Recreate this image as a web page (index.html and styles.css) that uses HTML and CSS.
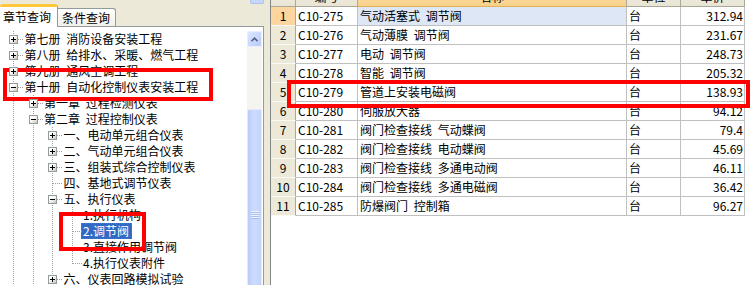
FILE: index.html
```html
<!DOCTYPE html>
<html lang="zh">
<head>
    <meta charset="UTF-8">
    <title>章节查询</title>
    <link rel="stylesheet" href="styles.css">
</head>
<body>

    <div class="side">
        <div class="strip"><span class="stripBtn"></span></div>
        <div class="tabs">
            <div class="tab tabOn">章节查询</div>
            <div class="tab">条件查询</div>
        </div>
        <div class="panel">
            <div class="tree">
                <div class="row"><i class="node"><span class="box"><svg viewBox="0 0 7 7"><path d="M1 3.5h5M3.5 1v5"/></svg></span></i><span class="label">第七册 消防设备安装工程</span></div>
                <div class="row"><i class="node"><span class="box"><svg viewBox="0 0 7 7"><path d="M1 3.5h5M3.5 1v5"/></svg></span></i><span class="label">第八册 给排水、采暖、燃气工程</span></div>
                <div class="row"><i class="node"><span class="box"><svg viewBox="0 0 7 7"><path d="M1 3.5h5M3.5 1v5"/></svg></span></i><span class="label">第九册 通风空调工程</span></div>
                <div class="row"><i class="node"><span class="box"><svg viewBox="0 0 7 7"><path d="M1 3.5h5"/></svg></span></i><span class="label">第十册 自动化控制仪表安装工程</span></div>

                <div class="row"><i class="guide"></i><i class="node"><span class="box"><svg viewBox="0 0 7 7"><path d="M1 3.5h5M3.5 1v5"/></svg></span></i><span class="label">第一章 过程检测仪表</span></div>
                <div class="row"><i class="guide"></i><i class="node"><span class="box"><svg viewBox="0 0 7 7"><path d="M1 3.5h5"/></svg></span></i><span class="label">第二章 过程控制仪表</span></div>

                <div class="row"><i class="guide"></i><i class="guide"></i><i class="node"><span class="box"><svg viewBox="0 0 7 7"><path d="M1 3.5h5M3.5 1v5"/></svg></span></i><span class="label">一、电动单元组合仪表</span></div>
                <div class="row"><i class="guide"></i><i class="guide"></i><i class="node"><span class="box"><svg viewBox="0 0 7 7"><path d="M1 3.5h5M3.5 1v5"/></svg></span></i><span class="label">二、气动单元组合仪表</span></div>
                <div class="row"><i class="guide"></i><i class="guide"></i><i class="node"><span class="box"><svg viewBox="0 0 7 7"><path d="M1 3.5h5M3.5 1v5"/></svg></span></i><span class="label">三、组装式综合控制仪表</span></div>
                <div class="row"><i class="guide"></i><i class="guide"></i><i class="node"></i><span class="label">四、基地式调节仪表</span></div>
                <div class="row"><i class="guide"></i><i class="guide"></i><i class="node"><span class="box"><svg viewBox="0 0 7 7"><path d="M1 3.5h5"/></svg></span></i><span class="label">五、执行仪表</span></div>

                <div class="row"><i class="guide"></i><i class="guide"></i><i class="guide"></i><i class="node"></i><span class="label">1.执行机构</span></div>
                <div class="row"><i class="guide"></i><i class="guide"></i><i class="guide"></i><i class="node"></i><span class="label sel">2.调节阀</span></div>
                <div class="row"><i class="guide"></i><i class="guide"></i><i class="guide"></i><i class="node"></i><span class="label">3.直接作用调节阀</span></div>
                <div class="row"><i class="guide"></i><i class="guide"></i><i class="guide"></i><i class="node last"></i><span class="label">4.执行仪表附件</span></div>

                <div class="row"><i class="guide"></i><i class="guide"></i><i class="node"><span class="box"><svg viewBox="0 0 7 7"><path d="M1 3.5h5M3.5 1v5"/></svg></span></i><span class="label">六、仪表回路模拟试验</span></div>
            </div>
            <div class="vscroll">
                <div class="sbUp"><svg width="7" height="5" viewBox="0 0 7 5"><path d="M0.5 4.2L3.5 1.2L6.5 4.2"/></svg></div>
                <div class="sbTrack"></div>
                <div class="sbThumb"><span class="grip"></span></div>
            </div>
        </div>
    </div>

    <div class="split"></div>

    <div class="main">
        <div class="grid">
            <div class="hd"></div><div class="hd">编号</div><div class="hd on">名称</div><div class="hd">单位</div><div class="hd">单价</div>

            <div class="no on">1</div><div>C10-275</div><div class="cur">气动活塞式 调节阀</div><div>台</div><div class="num">312.94</div>
            <div class="no">2</div><div>C10-276</div><div>气动薄膜 调节阀</div><div>台</div><div class="num">231.67</div>
            <div class="no">3</div><div>C10-277</div><div>电动 调节阀</div><div>台</div><div class="num">248.73</div>
            <div class="no">4</div><div>C10-278</div><div>智能 调节阀</div><div>台</div><div class="num">205.32</div>
            <div class="no">5</div><div>C10-279</div><div>管道上安装电磁阀</div><div>台</div><div class="num">138.93</div>
            <div class="no">6</div><div>C10-280</div><div>伺服放大器</div><div>台</div><div class="num">94.12</div>
            <div class="no">7</div><div>C10-281</div><div>阀门检查接线 气动蝶阀</div><div>台</div><div class="num">79.4</div>
            <div class="no">8</div><div>C10-282</div><div>阀门检查接线 电动蝶阀</div><div>台</div><div class="num">45.69</div>
            <div class="no">9</div><div>C10-283</div><div>阀门检查接线 多通电动阀</div><div>台</div><div class="num">46.11</div>
            <div class="no">10</div><div>C10-284</div><div>阀门检查接线 多通电磁阀</div><div>台</div><div class="num">36.42</div>
            <div class="no">11</div><div>C10-285</div><div>防爆阀门 控制箱</div><div>台</div><div class="num">96.27</div>
        </div>
    </div>

    <!-- red annotation boxes drawn over the screenshot -->
    <div class="mark markBook"></div>
    <div class="mark markItem"></div>
    <div class="mark markRow"></div>

</body>
</html>
```

FILE: styles.css
```css
* {
    box-sizing: border-box;
}
body {
    margin: 0;
    width: 755px;
    height: 285px;
    overflow: hidden;
    display: flex;
    background-color: #ECE9D8;
    font-family: "Noto Sans CJK SC", sans-serif;
    font-size: 12px;
    line-height: 16px;
    word-spacing: 3px;
    color: #000;
}

/* left side: tabs + tree */
.side {
    width: 264px;
    display: flex;
    flex-direction: column;
}
.strip {
    height: 5px;
}
.stripBtn {
    display: block;
    margin-left: 250px;
    width: 14px;
    height: 4px;
    background-color: #C5D5FC;
    border: 1px solid #AFC3F0;
    border-top: 0;
    border-radius: 0 0 2px 2px;
}
.tabs {
    display: flex;
    align-items: flex-end;
    height: 22px;
}
.tab {
    width: 58px;
    height: 18px;
    padding: 1px 0 0 4px;
    border: 1px solid #919B9C;
    border-left: 0;
    border-bottom: 0;
    border-radius: 0 3px 0 0;
    background: linear-gradient(#fff, #F1F0EA);
}
.tabOn {
    height: 23px;
    margin-bottom: -1px;
    padding: 0 0 0 3px;
    line-height: 20px;
    position: relative;
    z-index: 1;
    background: #fff;
    border-top: 3px solid #FFC83C;
    border-radius: 3px 3px 0 0;
}
.panel {
    flex: 1;
    display: flex;
    background-color: #fff;
    border-top: 1px solid #919B9C;
    border-right: 1px solid #919B9C;
}
.tree {
    flex: 1;
    padding: 4px 0 0 4px;
}
.row {
    display: flex;
    height: 16px;
    white-space: nowrap;
}
.node,
.guide {
    display: block;
    flex: none;
    width: 19.5px;
    height: 16px;
    position: relative;
}
.node::before,
.guide::before {
    content: "";
    position: absolute;
    left: 9px;
    top: 0;
    bottom: 0;
    width: 1px;
    background: linear-gradient(#A0A0A0 50%, transparent 50%);
    background-size: 1px 2px;
}
.node::after {
    content: "";
    position: absolute;
    left: 10px;
    right: 0;
    top: 8px;
    height: 1px;
    background: linear-gradient(to right, #A0A0A0 50%, transparent 50%);
    background-size: 2px 1px;
}
.node.last::before {
    bottom: auto;
    height: 9px;
}
.box {
    position: relative;
    z-index: 1;
    display: block;
    width: 9px;
    height: 9px;
    margin: 4px 0 0 5px;
    border: 1px solid #919B9C;
    background: linear-gradient(135deg, #fff 35%, #CBC5B6);
}
.box svg {
    display: block;
    width: 7px;
    height: 7px;
    fill: none;
    stroke: #000;
    stroke-width: 1;
}
.label {
    padding: 0 1px;
}
.label.sel {
    margin-left: -1px;
    padding: 0 3px 0 2px;
    background-color: #316AC5;
    color: #fff;
    outline: 1px dotted #8A7430;
    outline-offset: -1px;
}

/* tree scrollbar */
.vscroll {
    width: 15px;
    margin: 4px 1px 0 0;
    display: flex;
    flex-direction: column;
    background-color: #F5F4EF;
}
.sbUp {
    height: 16px;
    display: flex;
    justify-content: center;
    align-items: center;
    border: 1px solid #E8EEFD;
    border-radius: 2px;
    background: linear-gradient(135deg, #DCE6FE, #B8CBF8);
}
.sbUp svg {
    fill: none;
    stroke: #4D6185;
    stroke-width: 1.6;
}
.sbTrack {
    height: 62px;
}
.sbThumb {
    flex: 1;
    display: flex;
    justify-content: center;
    padding-top: 101px;
    border: 1px solid #E3EAFE;
    border-radius: 2px;
    background: linear-gradient(to right, #BACBF8, #CDDBFE 45%, #C3D3FC);
}
.grip {
    width: 8px;
    height: 8px;
    background: repeating-linear-gradient(#F2F6FF 0 1px, #A6BDF4 1px 2px);
}

.split {
    width: 6px;
}

/* right side: item grid */
.main {
    flex: 1;
    background-color: #fff;
    border-left: 1px solid #858585;
    overflow: hidden;
}
.grid {
    display: grid;
    grid-template-columns: 25px 62px 269px 54px 64px;
    grid-auto-rows: 19px;
    margin-top: -12px;
}
.grid > div {
    padding: 0 2px;
    line-height: 18px;
    white-space: nowrap;
    overflow: hidden;
    border-right: 1px solid #C0C0C0;
    border-bottom: 1px solid #C0C0C0;
}
.grid > .hd {
    text-align: center;
    background: linear-gradient(#F3F1E6, #E8E5D4);
    border-color: #ACA899;
}
.grid > .hd.on {
    background: linear-gradient(#FBE3B0, #F8D189);
    border-bottom-color: #E3B25A;
}
.grid > .no {
    text-align: center;
    background-color: #ECE9D8;
    border-right-color: #ACA899;
    border-bottom-color: #FAF9F3;
}
.grid > .no.on {
    background-color: #FCD59F;
}
.grid > .cur {
    background-color: #DEE7F5;
}
.grid > .num {
    text-align: right;
    padding-right: 1px;
}

/* annotations */
.mark {
    position: absolute;
    border: 4px solid #FF0000;
}
.markBook {
    left: 3px;
    top: 68px;
    width: 210px;
    height: 33px;
}
.markItem {
    left: 59px;
    top: 212px;
    width: 87px;
    height: 39px;
}
.markRow {
    left: 287px;
    top: 80px;
    width: 463px;
    height: 28px;
}
```
